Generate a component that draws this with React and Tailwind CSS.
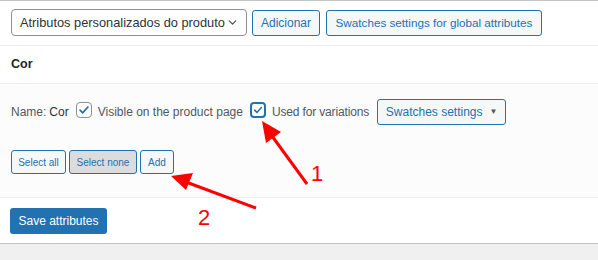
import { ChevronDown } from 'lucide-react'

function Check({ focused }) {
  return (
    <span
      className={`inline-flex h-4 w-4 items-center justify-center rounded-[4px] bg-white ${
        focused ? 'border-2 border-[#2271b1]' : 'border border-[#8c8f94]'
      }`}
    >
      <svg viewBox="0 0 16 16" className="h-[14px] w-[14px]" fill="none">
        <path d="M3.5 8.2l3 3 6-6.6" stroke="#2271b1" strokeWidth="2" strokeLinecap="round" strokeLinejoin="round" />
      </svg>
    </span>
  )
}

function SmallButton({ children, active, width }) {
  return (
    <button
      className={`h-[24px] rounded-[3px] border border-[#2271b1] text-[10px] whitespace-nowrap text-[#2271b1] ${width} ${
        active ? 'bg-[#dcdcde]' : 'bg-[#f6f7f7]'
      }`}
    >
      {children}
    </button>
  )
}

export default function App() {
  return (
    <div
      className="relative h-[260px] w-[598px] overflow-hidden bg-[#f0f0f0] text-[12px] text-[#2c3338] whitespace-nowrap"
      style={{ fontFamily: '"Liberation Sans", Arial, sans-serif' }}
    >
      <div className="border-y border-[#c3c4c7] bg-white">
        <div className="flex items-center gap-[5px] border-b border-[#eeeeee] pl-[11px] pt-[8px] pb-[9px]">
          <div className="flex h-[27px] w-[236px] items-center justify-between rounded-[4px] border border-[#8c8f94] pl-[8px] pr-[7px] text-[12.8px]">
            <span>Atributos personalizados do produto</span>
            <ChevronDown className="h-[13px] w-[13px] text-[#50575e]" strokeWidth={2.5} />
          </div>
          <button className="h-[26px] w-[68px] rounded-[3px] border border-[#2271b1] bg-[#f6f7f7] text-[12px] text-[#2271b1]">
            Adicionar
          </button>
          <button className="ml-[1px] h-[26px] w-[216px] rounded-[3px] border border-[#2271b1] bg-[#f6f7f7] text-[11.7px] text-[#2271b1]">
            Swatches settings for global attributes
          </button>
        </div>

        <div className="flex h-[38px] items-center border-b border-[#eeeeee] px-[11px] text-[12.5px] font-bold text-[#1d2327]">
          Cor
        </div>

        <div className="border-b border-[#eeeeee] bg-[#fcfcfc] pl-[11px] pt-[15px] pb-[23px]">
          <div className="flex h-[26px] items-center text-[12px] text-[#50575e]">
            <span>Name:</span>
            <span className="ml-[3px] text-[#2c3338]">Cor</span>
            <span className="ml-[7px]"><Check /></span>
            <span className="ml-[6px]">Visible on the product page</span>
            <span className="ml-[7px]"><Check focused /></span>
            <span className="ml-[6px] tracking-[-0.15px]">Used for variations</span>
            <button className="ml-[8px] flex h-[26px] w-[129px] items-center justify-center gap-[7px] rounded-[3px] border border-[#2271b1] bg-[#f6f7f7] text-[12px] text-[#2271b1]">
              Swatches settings
              <span className="text-[8px] text-[#50575e]">▼</span>
            </button>
          </div>
          <div className="mt-[25px] flex gap-[3px]">
            <SmallButton width="w-[55px]">Select all</SmallButton>
            <SmallButton width="w-[68px]" active>Select none</SmallButton>
            <SmallButton width="w-[34px]">Add</SmallButton>
          </div>
        </div>

        <div className="pl-[10px] pt-[10px] pb-[9px]">
          <button className="h-[26px] w-[97px] rounded-[3px] bg-[#2271b1] text-[12px] text-white">
            Save attributes
          </button>
        </div>
      </div>

      {/* red annotations drawn over the screenshot */}
      <svg className="pointer-events-none absolute inset-0" width="598" height="260">
        <line x1="307" y1="184" x2="272" y2="136" stroke="#ff0000" strokeWidth="3" />
        <polygon points="262,121 266,143 281,132" fill="#ff0000" />
        <line x1="256" y1="208" x2="186" y2="182" stroke="#ff0000" strokeWidth="3" />
        <polygon points="171,176 186,190 193,173" fill="#ff0000" />
      </svg>
      <span
        className="absolute left-[311px] top-[163px] text-[22px] leading-none text-[#ff0000]"
        style={{ fontFamily: '"Liberation Sans", sans-serif' }}
      >
        1
      </span>
      <span
        className="absolute left-[198px] top-[207px] text-[22px] leading-none text-[#ff0000]"
        style={{ fontFamily: '"Liberation Sans", sans-serif' }}
      >
        2
      </span>
    </div>
  )
}
